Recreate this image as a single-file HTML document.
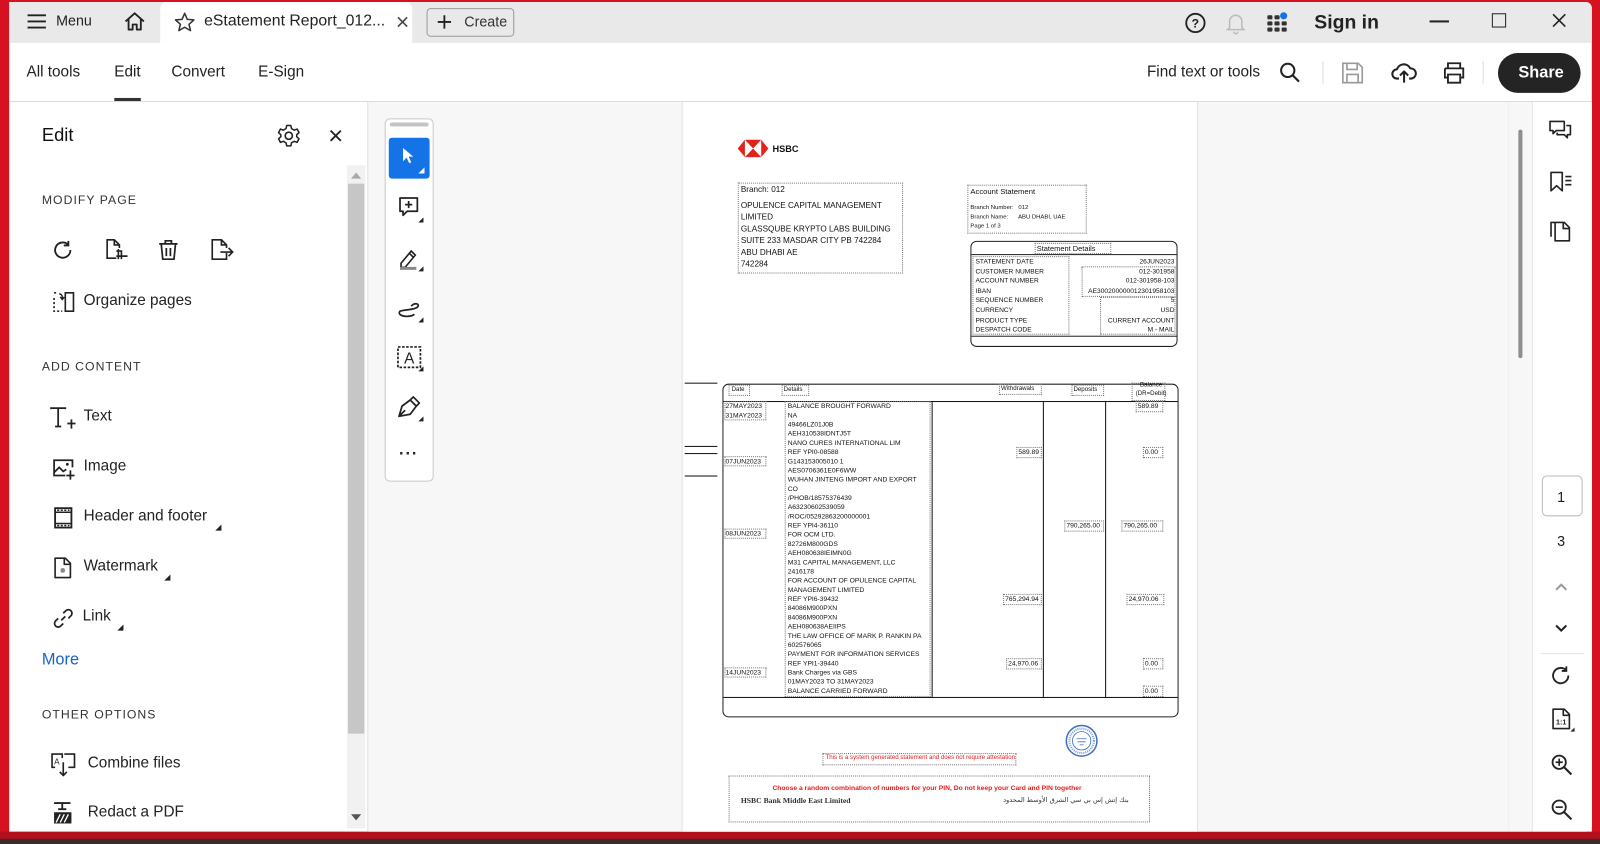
<!DOCTYPE html>
<html><head><meta charset="utf-8">
<style>
*{margin:0;padding:0;box-sizing:border-box}
html,body{width:1600px;height:844px;overflow:hidden;background:#3a2b2d}
#w{position:absolute;left:0;top:0;width:1568px;height:827px;transform:scale(1.02041);transform-origin:0 0;background:#d5121f;font-family:"Liberation Sans",sans-serif;color:#222}
.a{position:absolute}
.t{position:absolute;white-space:nowrap}
.ui{font-size:15px;color:#222}
.sec{font-size:12px;letter-spacing:1px;color:#333}
.doc{font-family:"Liberation Sans",sans-serif;color:#111}
.dt{border:1px dotted #777}
.ln{position:absolute;background:#111}
.tx{position:absolute;white-space:nowrap;font-size:6.6px;line-height:9px;color:#111;font-family:"Liberation Sans",sans-serif}
svg{position:absolute;overflow:visible}
</style></head><body><div id="w">
<div class="a" style="left:0;top:815px;width:1568px;height:8px;background:#b30f1d"></div>
<div class="a" style="left:0;top:822px;width:1568px;height:5px;background:#3a2b2d"></div>
<div class="a" style="left:9px;top:2px;width:1551px;height:813px;background:#fff;border-radius:0 6px 6px 0;overflow:hidden">
 <div class="a" style="left:0;top:0;width:1551px;height:40px;background:#e9e9e9"></div>
 <div class="a" style="left:148px;top:0;width:247px;height:40px;background:#fff;border-radius:6px 6px 0 0"></div>
 <div class="a" style="left:0;top:97px;width:1551px;height:1px;background:#dcdcdc"></div>
</div>
<svg style="left:27px;top:14px" width="18" height="14"><path d="M0 1H18M0 7H18M0 13H18" stroke="#222" stroke-width="1.8"/></svg>
<div class="t ui" style="left:55px;top:12px;font-size:14px">Menu</div>
<svg style="left:121px;top:11px" width="22" height="20"><path d="M2 10L11 2L20 10M5 8V18H9V13H13V18H17V8" fill="none" stroke="#222" stroke-width="1.8" stroke-linejoin="round"/></svg>
<svg style="left:171px;top:12px" width="20" height="19"><path d="M10 1L12.6 7L19 7.5L14.2 11.8L15.7 18L10 14.7L4.3 18L5.8 11.8L1 7.5L7.4 7Z" fill="none" stroke="#333" stroke-width="1.5" stroke-linejoin="round"/></svg>
<div class="t ui" style="left:200px;top:12px;font-size:15.5px">eStatement Report_012...</div>
<svg style="left:389px;top:16px" width="11" height="11"><path d="M1 1L10 10M10 1L1 10" stroke="#444" stroke-width="1.6"/></svg>
<div class="a" style="left:418px;top:8px;width:86px;height:28px;border:1.5px solid #9a9a9a;border-radius:4px;background:#e9e9e9"></div>
<svg style="left:429px;top:15px" width="13" height="13"><path d="M6.5 0V13M0 6.5H13" stroke="#222" stroke-width="1.8"/></svg>
<div class="t ui" style="left:455px;top:13px;font-size:14px;color:#333">Create</div>
<svg style="left:1161px;top:12px" width="21" height="21"><circle cx="10.5" cy="10.5" r="9" fill="none" stroke="#222" stroke-width="1.8"/><text x="10.5" y="15" font-size="12" font-weight="bold" text-anchor="middle" font-family="Liberation Sans" fill="#222">?</text></svg>
<svg style="left:1202px;top:12px" width="18" height="21"><path d="M3 15V9A6 6 0 0 1 15 9V15L17 17H1Z M7 19A2 2 0 0 0 11 19" fill="none" stroke="#bbb" stroke-width="1.5"/></svg>
<svg style="left:1242px;top:14px" width="20" height="18"><g fill="#333"><rect x="0" y="1" width="5" height="4" rx="1"/><rect x="7" y="1" width="5" height="4" rx="1"/><rect x="0" y="7" width="5" height="4" rx="1"/><rect x="7" y="7" width="5" height="4" rx="1"/><rect x="14" y="7" width="5" height="4" rx="1"/><rect x="0" y="13" width="5" height="4" rx="1"/><rect x="7" y="13" width="5" height="4" rx="1"/><rect x="14" y="13" width="5" height="4" rx="1"/></g><circle cx="16" cy="1.5" r="3.5" fill="#1473e6"/></svg>
<div class="t" style="left:1288px;top:12px;font-size:19px;font-weight:bold;color:#222">Sign in</div>
<div class="a" style="left:1401px;top:20px;width:19px;height:2px;background:#222"></div>
<div class="a" style="left:1462px;top:13px;width:14px;height:14px;border:1.5px solid #222"></div>
<svg style="left:1521px;top:13px" width="14" height="14"><path d="M1 1L13 13M13 1L1 13" stroke="#222" stroke-width="1.6"/></svg>
<div class="t ui" style="left:26px;top:62px">All tools</div>
<div class="t ui" style="left:112px;top:62px">Edit</div>
<div class="a" style="left:112px;top:96px;width:26px;height:3px;background:#333"></div>
<div class="t ui" style="left:168px;top:62px">Convert</div>
<div class="t ui" style="left:253px;top:62px">E-Sign</div>
<div class="t ui" style="left:1124px;top:62px">Find text or tools</div>
<svg style="left:1254px;top:61px" width="21" height="21"><circle cx="8" cy="8" r="6.5" fill="none" stroke="#222" stroke-width="2"/><path d="M13 13L19 19" stroke="#222" stroke-width="2.2"/></svg>
<div class="a" style="left:1296px;top:60px;width:1px;height:22px;background:#ddd"></div>
<svg style="left:1315px;top:61px" width="21" height="21"><path d="M1 1H16L20 5V20H1Z M5 1V7H15V1 M5 20V12H16V20" fill="none" stroke="#999" stroke-width="1.6"/></svg>
<svg style="left:1364px;top:60px" width="24" height="22"><path d="M7 17H5A4.5 4.5 0 0 1 5 8A7 7 0 0 1 18 7A4.5 4.5 0 0 1 19 17H17 M12 21V10M8 14L12 10L16 14" fill="none" stroke="#222" stroke-width="2" stroke-linejoin="round"/></svg>
<svg style="left:1413px;top:61px" width="24" height="21"><path d="M6 6V1H18V6 M3 6H21V15H18 M6 15H3V6 M6 12H18V20H6Z" fill="none" stroke="#222" stroke-width="1.8"/></svg>
<div class="a" style="left:1453px;top:60px;width:1px;height:22px;background:#ddd"></div>
<div class="a" style="left:1468px;top:52px;width:81px;height:39px;border-radius:20px;background:#242424"></div>
<div class="t" style="left:1488px;top:63px;font-size:16px;font-weight:bold;color:#fff">Share</div>
<div class="t" style="left:41px;top:122px;font-size:18px;color:#111">Edit</div>
<svg style="left:272px;top:122px" width="22" height="22"><circle cx="11" cy="11" r="3.5" fill="none" stroke="#222" stroke-width="1.6"/><path d="M9 1H13L13.7 4 16.3 5.5 19.2 4.5 21 8 18.8 10 18.8 12 21 14 19.2 17.5 16.3 16.5 13.7 18 13 21H9L8.3 18 5.7 16.5 2.8 17.5 1 14 3.2 12 3.2 10 1 8 2.8 4.5 5.7 5.5 8.3 4Z" fill="none" stroke="#222" stroke-width="1.5" stroke-linejoin="round"/></svg>
<svg style="left:324px;top:128px" width="10" height="10"><path d="M0 0L10 10M10 0L0 10" stroke="#222" stroke-width="1.8"/></svg>
<div class="a" style="left:340px;top:162px;width:18px;height:650px;background:#f1f1f1"></div>
<div class="a" style="left:341px;top:180px;width:16px;height:539px;background:#c6c6c6"></div>
<svg style="left:344px;top:169px" width="10" height="6"><path d="M0 6L5 0L10 6Z" fill="#aaa"/></svg>
<svg style="left:344px;top:798px" width="10" height="6"><path d="M0 0L5 6L10 0Z" fill="#555"/></svg>
<div class="a" style="left:360px;top:100px;width:1px;height:715px;background:#dcdcdc"></div>
<div class="t sec" style="left:41px;top:189px">MODIFY PAGE</div>
<svg style="left:52px;top:235px" width="20" height="20"><path d="M17 10A7.5 7.5 0 1 1 14.5 4.5 M15 1V5.5H10.5" fill="none" stroke="#222" stroke-width="1.8"/></svg>
<svg style="left:104px;top:234px" width="22" height="22"><path d="M10 19H1V1H8L13 6V9 M8 1V6H13 M12 10V20 M10 17H21 M15 20V12H10" fill="none" stroke="#222" stroke-width="1.6"/></svg>
<svg style="left:155px;top:235px" width="20" height="20"><path d="M1 4H19M7 4V1H13V4 M3 4L4.5 19H15.5L17 4 M8 8V16M12 8V16" fill="none" stroke="#222" stroke-width="1.7"/></svg>
<svg style="left:207px;top:234px" width="22" height="22"><path d="M15 14V20H1V1H10L15 6V9 M10 1V6H15 M9 13H21M17 9L21 13L17 17" fill="none" stroke="#222" stroke-width="1.6"/></svg>
<svg style="left:52px;top:286px" width="21" height="20"><path d="M12 1H20V19H12Z" fill="none" stroke="#222" stroke-width="1.6"/><path d="M1 6V19H9M1 1H4" fill="none" stroke="#222" stroke-width="1.6" stroke-dasharray="2 2"/><path d="M6 2A3 3 0 0 1 9 5V7M7 5L9 7.5L11 5" fill="none" stroke="#222" stroke-width="1.4"/></svg>
<div class="t ui" style="left:82px;top:286px">Organize pages</div>
<div class="t sec" style="left:41px;top:352px">ADD CONTENT</div>
<svg style="left:49px;top:399px" width="26" height="24"><path d="M1 2V1H15V2 M8 1V19 M5 19H11 M17 16H25M21 12V21" fill="none" stroke="#222" stroke-width="1.7"/></svg>
<div class="t ui" style="left:82px;top:399px">Text</div>
<svg style="left:52px;top:449px" width="22" height="22"><path d="M12 17H1V2H19V9 M1 14L6 9L10 13L13 11 M17 12V21 M13 17H21" fill="none" stroke="#222" stroke-width="1.7"/><circle cx="14" cy="6" r="1.4" fill="#222"/></svg>
<div class="t ui" style="left:82px;top:448px">Image</div>
<svg style="left:53px;top:497px" width="18" height="21"><rect x="1" y="1" width="16" height="19" fill="none" stroke="#222" stroke-width="1.8"/><path d="M1 5H17M1 16H17" stroke="#222" stroke-width="1.5"/><path d="M3 3H15M3 18H15" stroke="#222" stroke-width="1.5" stroke-dasharray="2 1.5"/></svg>
<div class="t ui" style="left:82px;top:497px">Header and footer</div>
<svg style="left:211px;top:514px" width="6" height="6"><path d="M6 0V6H0Z" fill="#222"/></svg>
<svg style="left:53px;top:546px" width="17" height="21"><path d="M1 1H11L16 6V20H1Z M10 1V7H16" fill="none" stroke="#222" stroke-width="1.6" stroke-linejoin="round"/><circle cx="8.5" cy="13" r="2.3" fill="#888"/></svg>
<div class="t ui" style="left:82px;top:546px">Watermark</div>
<svg style="left:161px;top:563px" width="6" height="6"><path d="M6 0V6H0Z" fill="#222"/></svg>
<svg style="left:52px;top:596px" width="20" height="20"><path d="M8 12L12 8 M10 5L12.5 2.5A3.5 3.5 0 0 1 17.5 7.5L15 10 M10 15L7.5 17.5A3.5 3.5 0 0 1 2.5 12.5L5 10" fill="none" stroke="#222" stroke-width="1.7"/></svg>
<div class="t ui" style="left:81px;top:595px">Link</div>
<svg style="left:115px;top:612px" width="6" height="6"><path d="M6 0V6H0Z" fill="#222"/></svg>
<div class="t" style="left:41px;top:638px;font-size:16px;color:#1a64c8">More</div>
<div class="t sec" style="left:41px;top:693px">OTHER OPTIONS</div>
<svg style="left:50px;top:738px" width="24" height="24"><path d="M4 14H1V1H11V5 M13 1H23V14H17 M12 9V22M8.5 18.5L12 22L15.5 18.5" fill="none" stroke="#222" stroke-width="1.6"/><text x="3" y="11" font-size="8" font-family="Liberation Sans" fill="#222">A</text></svg>
<div class="t ui" style="left:86px;top:739px">Combine files</div>
<svg style="left:52px;top:786px" width="19" height="24"><path d="M1 1H17M9 1V7M5 7H13" stroke="#222" stroke-width="1.8" fill="none"/><rect x="1" y="10" width="17" height="11" fill="#222"/><path d="M3 20L7 12M7 20L11 12M11 20L15 12" stroke="#fff" stroke-width="1.3"/></svg>
<div class="t ui" style="left:86px;top:787px">Redact a PDF</div>
<div class="a" style="left:361px;top:100px;width:1117px;height:715px;background:#f7f7f7"></div>
<div class="a" style="left:668px;top:100px;width:506px;height:715px;background:#fff;border-left:1px solid #e2e2e2;border-right:1px solid #e2e2e2"></div>
<div class="a" style="left:1478px;top:100px;width:22px;height:715px;background:#f7f7f7;border-left:1px solid #eee"></div>
<div class="a" style="left:1488px;top:127px;width:4px;height:224px;background:#8e8e8e;border-radius:2px"></div>
<div class="a" style="left:1501px;top:100px;width:59px;height:715px;background:#fff;border-left:1px solid #e0e0e0"></div>
<div class="a" style="left:377px;top:116px;width:48px;height:356px;border:1px solid #c8c8c8;border-radius:5px;background:#fff"></div>
<div class="a" style="left:382px;top:120px;width:38px;height:4px;background:#c4c4c4;border-radius:2px"></div>
<div class="a" style="left:381px;top:135px;width:40px;height:40px;background:#1473e6;border-radius:3px"></div>
<svg style="left:394px;top:144px" width="12" height="17"><path d="M1 1V14L4.5 10.5L7 16L9 15L6.5 9.5H11Z" fill="#fff"/></svg>
<svg style="left:410px;top:164px" width="6" height="6"><path d="M6 0V6H0Z" fill="#fff"/></svg>
<svg style="left:390px;top:193px" width="28" height="26"><path d="M2 1H19V14H9L5 18V14H2Z M10.5 4V11M7 7.5H14" fill="none" stroke="#222" stroke-width="1.7" stroke-linejoin="round"/><path d="M25 20V25H20Z" fill="#222"/></svg>
<svg style="left:389px;top:241px" width="29" height="27"><path d="M4 17L14 5L18 9L8 21H4Z M12 7L16 11" fill="none" stroke="#222" stroke-width="1.6"/><path d="M3 22H19" stroke="#888" stroke-width="3"/><path d="M26 20V25H21Z" fill="#222"/></svg>
<svg style="left:389px;top:291px" width="29" height="27"><path d="M14 9C18 5 23 7 20 10C17 13 8 12 3 14C1 16 3 19 10 19C14 19 16 18 17 17" fill="none" stroke="#222" stroke-width="1.7"/><path d="M26 20V25H21Z" fill="#222"/></svg>
<svg style="left:389px;top:339px" width="29" height="27"><rect x="1" y="1" width="22" height="20" fill="none" stroke="#222" stroke-width="1.7" stroke-dasharray="2.5 1.5"/><text x="12" y="17" font-size="15" text-anchor="middle" font-family="Liberation Sans" fill="#222">A</text><path d="M26 20V25H21Z" fill="#222"/></svg>
<svg style="left:389px;top:388px" width="29" height="27"><path d="M2 20L5 10L13 4L19 10L13 18Z M13 4L16 1L22 7L19 10 M2 20L8 14" fill="none" stroke="#222" stroke-width="1.7" stroke-linejoin="round"/><path d="M26 20V25H21Z" fill="#222"/></svg>
<div class="t" style="left:391px;top:437px;font-size:16px;font-weight:bold;letter-spacing:1px">···</div>
<svg style="left:1518px;top:118px" width="22" height="19"><path d="M1 1H15V10H7L4 13V10H1Z M17 5H21V14H18V17L15 14H8V12" fill="none" stroke="#222" stroke-width="1.6" stroke-linejoin="round"/></svg>
<svg style="left:1519px;top:168px" width="22" height="21"><path d="M1 1H12V19L6.5 14L1 19Z M15 5H21M15 9H21M15 13H21" fill="none" stroke="#222" stroke-width="1.6" stroke-linejoin="round"/></svg>
<svg style="left:1519px;top:214px" width="21" height="23"><path d="M5 4H1V18 M5 22V4H14L19 9V22Z M13 4V10H19" fill="none" stroke="#222" stroke-width="1.6" stroke-linejoin="round"/></svg>
<div class="a" style="left:1511px;top:466px;width:40px;height:40px;border:1px solid #bbb;border-radius:5px"></div>
<div class="t" style="left:1526px;top:479px;font-size:14px">1</div>
<div class="t" style="left:1526px;top:522px;font-size:14px">3</div>
<svg style="left:1524px;top:571px" width="12" height="8"><path d="M1 7L6 2L11 7" fill="none" stroke="#999" stroke-width="2"/></svg>
<svg style="left:1524px;top:612px" width="12" height="8"><path d="M1 1L6 6L11 1" fill="none" stroke="#222" stroke-width="2"/></svg>
<div class="a" style="left:1510px;top:640px;width:42px;height:1px;background:#e3e3e3"></div>
<svg style="left:1520px;top:652px" width="20" height="20"><path d="M17 10A7.5 7.5 0 1 1 14.5 4.5 M15 1V5.5H10.5" fill="none" stroke="#222" stroke-width="1.8"/></svg>
<svg style="left:1521px;top:694px" width="22" height="24"><path d="M1 1H12L17 6V20H1Z M11 1V7H17" fill="none" stroke="#222" stroke-width="1.6" stroke-linejoin="round"/><text x="9" y="16" font-size="7" text-anchor="middle" font-family="Liberation Sans" font-weight="bold" fill="#222">1:1</text><path d="M22 19V23H18Z" fill="#222"/></svg>
<svg style="left:1520px;top:739px" width="22" height="22"><circle cx="8" cy="8" r="6.5" fill="none" stroke="#222" stroke-width="1.8"/><path d="M13 13L20 20" stroke="#222" stroke-width="2"/><path d="M8 4.5V11.5M4.5 8H11.5" stroke="#222" stroke-width="1.6"/></svg>
<svg style="left:1520px;top:783px" width="22" height="22"><circle cx="8" cy="8" r="6.5" fill="none" stroke="#222" stroke-width="1.8"/><path d="M13 13L20 20" stroke="#222" stroke-width="2"/><path d="M4.5 8H11.5" stroke="#222" stroke-width="1.6"/></svg>

<svg style="left:723px;top:137px" width="30" height="17"><path d="M0 8.5L7 0V17Z M30 8.5L23 0V17Z M7 0H23L15 8.5Z M7 17H23L15 8.5Z" fill="#e2231a"/></svg>
<div class="t doc" style="left:757px;top:141px;font-size:9px;font-weight:bold">HSBC</div>
<div class="a dt" style="left:723px;top:179px;width:162px;height:89px"></div>
<div class="t doc" style="left:726px;top:180px;font-size:8px;line-height:11.3px">Branch: 012</div>
<div class="t doc" style="left:726px;top:196px;font-size:8px;line-height:11.4px">OPULENCE CAPITAL MANAGEMENT<br>LIMITED<br>GLASSQUBE KRYPTO LABS BUILDING<br>SUITE 233 MASDAR CITY PB 742284<br>ABU DHABI AE<br>742284</div>
<div class="a dt" style="left:948px;top:181px;width:117px;height:48px"></div>
<div class="t doc" style="left:951px;top:183px;font-size:7.5px">Account Statement</div>
<div class="t doc" style="left:951px;top:200px;font-size:5.8px;line-height:9.2px">Branch Number:&nbsp;&nbsp;&nbsp;012<br>Branch Name:&nbsp;&nbsp;&nbsp;&nbsp;&nbsp;&nbsp;ABU DHABI, UAE<br>Page 1 of 3</div>
<div class="a" style="left:951px;top:236px;width:203px;height:104px;border:1.3px solid #222;border-radius:6px"></div>
<div class="a" style="left:952px;top:249px;width:201px;height:1px;background:#222"></div>
<div class="a" style="left:952px;top:329px;width:201px;height:1px;background:#222"></div>
<div class="a dt" style="left:1014px;top:238px;width:75px;height:11px"></div>
<div class="t doc" style="left:1016px;top:239px;font-size:7.3px">Statement Details</div>
<div class="a dt" style="left:953px;top:251px;width:95px;height:77px"></div>
<div class="a dt" style="left:1060px;top:261px;width:92px;height:30px"></div>
<div class="a dt" style="left:1078px;top:291px;width:74px;height:37px"></div>
<div class="t doc" style="left:956px;top:252px;font-size:6.5px;line-height:9.6px">STATEMENT DATE<br>CUSTOMER NUMBER<br>ACCOUNT NUMBER<br>IBAN<br>SEQUENCE NUMBER<br>CURRENCY<br>PRODUCT TYPE<br>DESPATCH CODE</div>
<div class="t doc" style="right:417px;top:252px;font-size:6.5px;line-height:9.6px;text-align:right">26JUN2023<br>012-301958<br>012-301958-103<br>AE300200000012301958103<br>5<br>USD<br>CURRENT ACCOUNT<br>M - MAIL</div>
<div class="ln" style="left:671px;top:375px;width:32px;height:1px"></div>
<div class="ln" style="left:671px;top:437px;width:32px;height:1px"></div>
<div class="ln" style="left:671px;top:444px;width:32px;height:1px"></div>
<div class="ln" style="left:671px;top:466px;width:32px;height:1px"></div>
<div class="a" style="left:708px;top:376px;width:447px;height:327px;border:1.3px solid #222;border-radius:6px"></div>
<div class="ln" style="left:709px;top:393px;width:445px;height:1px"></div>
<div class="ln" style="left:709px;top:683px;width:445px;height:1px"></div>
<div class="ln" style="left:913px;top:394px;width:1px;height:289px"></div>
<div class="ln" style="left:1022px;top:394px;width:1px;height:289px"></div>
<div class="ln" style="left:1083px;top:394px;width:1px;height:289px"></div>
<div class="a dt" style="left:769px;top:393px;width:143px;height:290px"></div>
<div class="a dt" style="left:714px;top:377px;width:21px;height:11px"></div>
<div class="tx" style="left:717px;top:378px;font-size:6px">Date</div>
<div class="a dt" style="left:766px;top:377px;width:27px;height:11px"></div>
<div class="tx" style="left:768px;top:378px;font-size:6px">Details</div>
<div class="a dt" style="left:979px;top:376px;width:42px;height:11px"></div>
<div class="tx" style="left:981px;top:377px;font-size:6px">Withdrawals</div>
<div class="a dt" style="left:1050px;top:377px;width:32px;height:11px"></div>
<div class="tx" style="left:1052px;top:378px;font-size:6px">Deposits</div>
<div class="a dt" style="left:1109px;top:375px;width:33px;height:18px"></div>
<div class="tx" style="left:1113px;top:374px;font-size:6px;line-height:8px;text-align:center">Balance<br>(DR=Debit)</div>
<div class="tx" style="left:772px;top:394px">BALANCE BROUGHT FORWARD<br>NA<br>49466LZ01J0B<br>AEH310538IDNTJ5T<br>NANO CURES INTERNATIONAL LIM<br>REF YPI0-08588<br>G143153005010 1<br>AES0706361E0F6WW<br>WUHAN JINTENG IMPORT AND EXPORT<br>CO<br>/PHOB/18575376439<br>A63230602539059<br>/ROC/05292863200000001<br>REF YPI4-36110<br>FOR OCM LTD.<br>82726M800GDS<br>AEH080638IEIMN0G<br>M31 CAPITAL MANAGEMENT, LLC<br>2416178<br>FOR ACCOUNT OF OPULENCE CAPITAL<br>MANAGEMENT LIMITED<br>REF YPI6-39432<br>84086M900PXN<br>84086M900PXN<br>AEH080638AEIIPS<br>THE LAW OFFICE OF MARK P. RANKIN PA<br>602576065<br>PAYMENT FOR INFORMATION SERVICES<br>REF YPI1-39440<br>Bank Charges via GBS<br>01MAY2023 TO 31MAY2023<br>BALANCE CARRIED FORWARD</div>
<div class="a dt" style="left:710px;top:393px;width:41px;height:19px"></div>
<div class="tx" style="left:711px;top:394px">27MAY2023<br>31MAY2023</div>
<div class="a dt" style="left:710px;top:447px;width:41px;height:10px"></div>
<div class="tx" style="left:711px;top:448px">07JUN2023</div>
<div class="a dt" style="left:710px;top:518px;width:41px;height:10px"></div>
<div class="tx" style="left:711px;top:519px">08JUN2023</div>
<div class="a dt" style="left:710px;top:654px;width:41px;height:10px"></div>
<div class="tx" style="left:711px;top:655px">14JUN2023</div>
<div class="a dt" style="left:996px;top:438px;width:25px;height:11px"></div><div class="tx" style="left:998px;top:439px">589.89</div>
<div class="a dt" style="left:983px;top:582px;width:38px;height:11px"></div><div class="tx" style="left:985px;top:583px">765,294.94</div>
<div class="a dt" style="left:986px;top:645px;width:35px;height:11px"></div><div class="tx" style="left:988px;top:646px">24,970.06</div>
<div class="a dt" style="left:1043px;top:510px;width:39px;height:11px"></div><div class="tx" style="left:1045px;top:511px">790,265.00</div>
<div class="a dt" style="left:1113px;top:393px;width:27px;height:11px"></div><div class="tx" style="left:1115px;top:394px">589.89</div>
<div class="a dt" style="left:1120px;top:438px;width:20px;height:11px"></div><div class="tx" style="left:1122px;top:439px">0.00</div>
<div class="a dt" style="left:1099px;top:510px;width:41px;height:11px"></div><div class="tx" style="left:1101px;top:511px">790,265.00</div>
<div class="a dt" style="left:1104px;top:582px;width:37px;height:11px"></div><div class="tx" style="left:1106px;top:583px">24,970.06</div>
<div class="a dt" style="left:1120px;top:645px;width:20px;height:11px"></div><div class="tx" style="left:1122px;top:646px">0.00</div>
<div class="a dt" style="left:1120px;top:672px;width:20px;height:11px"></div><div class="tx" style="left:1122px;top:673px">0.00</div>
<svg style="left:1044px;top:710px" width="32" height="32"><circle cx="16" cy="16" r="15" fill="none" stroke="#3d6fc0" stroke-width="1.5"/><circle cx="16" cy="16" r="9" fill="none" stroke="#3d6fc0" stroke-width="0.8"/><circle cx="16" cy="16" r="12" fill="none" stroke="#7d9ddb" stroke-width="2" stroke-dasharray="1 1"/><path d="M11 14H21M12 17H20M14 20H18" stroke="#3d6fc0" stroke-width="0.8"/></svg>
<div class="a dt" style="left:806px;top:738px;width:190px;height:12px"></div>
<div class="t doc" style="left:809px;top:740px;font-size:6px;color:#e02020">This is a system generated statement and does not require attestation</div>
<div class="a dt" style="left:714px;top:760px;width:413px;height:46px"></div>
<div class="t doc" style="left:757px;top:769px;font-size:6.6px;font-weight:bold;color:#e81c1c">Choose a random combination of numbers for your PIN, Do not keep your Card and PIN together</div>
<div class="t" style="left:726px;top:780px;font-size:7.5px;font-weight:bold;font-family:'Liberation Serif',serif;color:#333">HSBC Bank Middle East Limited</div>
<div class="t" style="left:983px;top:780px;font-size:6.5px;font-family:'DejaVu Sans',sans-serif;color:#333">بنك إتش إس بي سي الشرق الأوسط المحدود</div>
</div></body></html>
